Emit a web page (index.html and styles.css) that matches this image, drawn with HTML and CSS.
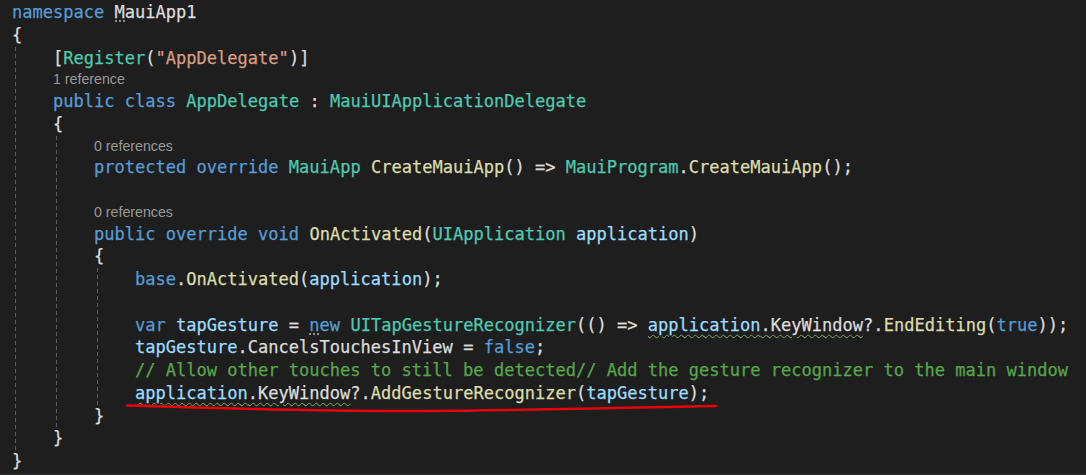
FILE: index.html
```html
<!DOCTYPE html>
<html>
<head>
  <title>AppDelegate.cs</title>
  <link rel="stylesheet" href="styles.css">
</head>
<body>

  <div class="editor">
    <div class="ln"><span class="kw">namespace</span> <span class="hint">M</span>auiApp1</div>
    <div class="ln">{</div>

    <!-- class body -->
    <div class="block">
      <div class="ln">[<span class="ty">Register</span>(<span class="str">"AppDelegate"</span>)]</div>
      <div class="lens">1 reference</div>
      <div class="ln"><span class="kw">public</span> <span class="kw">class</span> <span class="ty">AppDelegate</span> : <span class="ty">MauiUIApplicationDelegate</span></div>
      <div class="ln">{</div>

      <div class="block">
        <div class="lens">0 references</div>
        <div class="ln"><span class="kw">protected</span> <span class="kw">override</span> <span class="ty">MauiApp</span> <span class="fn">CreateMauiApp</span>() =&gt; <span class="ty">MauiProgram</span>.<span class="fn">CreateMauiApp</span>();</div>
        <div class="ln"></div>
        <div class="lens">0 references</div>
        <div class="ln"><span class="kw">public</span> <span class="kw">override</span> <span class="kw">void</span> <span class="fn">OnActivated</span>(<span class="ty">UIApplication</span> <span class="var">application</span>)</div>
        <div class="ln">{</div>

        <!-- method body -->
        <div class="block">
          <div class="ln"><span class="kw">base</span>.<span class="fn">OnActivated</span>(<span class="var">application</span>);</div>
          <div class="ln"></div>
          <div class="ln"><span class="kw">var</span> <span class="var">tapGesture</span> = <span class="kw"><span class="hint">n</span>ew</span> <span class="ty">UITapGestureRecognizer</span>(() =&gt; <span class="squiggle"><span class="var">application</span>.KeyWindow</span>?.<span class="fn">EndEditing</span>(<span class="kw">true</span>));</div>
          <div class="ln"><span class="var">tapGesture</span>.CancelsTouchesInView = <span class="kw">false</span>;</div>
          <div class="ln"><span class="cm">// Allow other touches to still be detected// Add the gesture recognizer to the main window</span></div>
          <div class="ln"><span class="squiggle"><span class="var">application</span>.KeyWindow</span>?.<span class="fn">AddGestureRecognizer</span>(<span class="var">tapGesture</span>);</div>
        </div>

        <div class="ln">}</div>
      </div>

      <div class="ln">}</div>
    </div>

    <div class="ln">}</div>

    <!-- hand-drawn red underline -->
    <svg class="mark" width="1086" height="475" viewBox="0 0 1086 475">
      <path d="M127 405.5 C 200 407.5, 300 411.5, 420 411 S 640 407, 716 406" fill="none" stroke="#e8000b" stroke-width="2.4" stroke-linecap="round"/>
    </svg>
  </div>

</body>
</html>
```

FILE: styles.css
```css
:root {
  --bg: #1e1e1e;
  --text: #dcdcdc;
  --keyword: #569cd6;
  --type: #4ec9b0;
  --method: #dcdcaa;
  --string: #d69d85;
  --local: #9cdcfe;
  --comment: #57a64a;
  --guide: #5e5e5e;
}

html, body {
  margin: 0;
  padding: 0;
  background-color: var(--bg);
}

.editor {
  position: relative;
  height: 100vh;
  box-sizing: border-box;
  padding: 1px 0 0 12px;
  border-bottom: 2px solid #2a2a2a;
  font-family: "DejaVu Sans Mono", monospace;
  font-size: 17.05px;
  color: var(--text);
  overflow: hidden;
}

.ln {
  height: 22.75px;
  line-height: 22.75px;
  white-space: pre;
  -webkit-text-stroke: 0.25px currentColor;
}

.lens {
  height: 20.8px;
  line-height: 20.8px;
  white-space: pre;
  font-family: "Liberation Sans", sans-serif;
  font-size: 14.2px;
  color: #999999;
}

/* indent guide drawn as a dashed 1px stripe at the brace column */
.block {
  padding-left: 4ch;
  background-image: repeating-linear-gradient(to bottom, var(--guide) 0 4px, transparent 4px 7px);
  background-size: 1px 100%;
  background-position: 3px 0;
  background-repeat: no-repeat;
}

.kw { color: var(--keyword); }
.ty { color: var(--type); }
.fn { color: var(--method); }
.str { color: var(--string); }
.var { color: var(--local); }
.cm { color: var(--comment); }

.hint {
  background-image: linear-gradient(to right, #8c8c8c 2px, transparent 2px);
  background-size: 4px 2px;
  background-position: 0 100%;
  background-repeat: repeat-x;
}

.squiggle {
  text-decoration: underline wavy #7aa35a;
  text-decoration-thickness: 1px;
  text-underline-offset: 3px;
}

.mark {
  position: absolute;
  left: 0;
  top: 0;
  pointer-events: none;
}
```
